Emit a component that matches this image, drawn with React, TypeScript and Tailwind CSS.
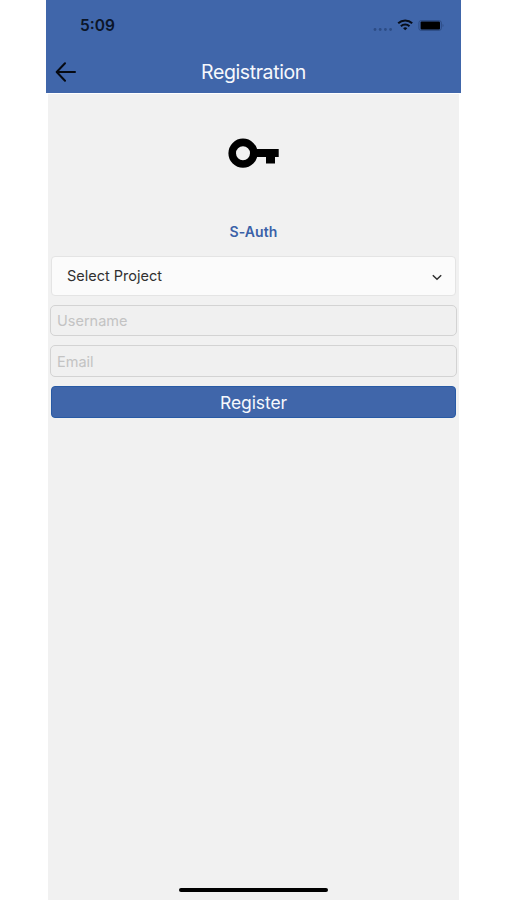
import React, { useState } from 'react'

//Key logo shown above the form
function KeyLogo() {
  return (
    <svg width="52" height="30" viewBox="0 0 52 30">
      <circle cx="15" cy="15.2" r="10.8" fill="none" stroke="#000" strokeWidth="7.6" />
      <path d="M27 11H50.7V18.9H47V25.4H38V18.9H27Z" fill="#000" />
    </svg>
  )
}

function StatusBar() {
  return (
    <div className="flex h-[51px] items-center justify-between pl-[34px] pr-[17px]">
      <span className="mt-px text-[15.5px] font-semibold leading-5 text-[#0b1528]">5:09</span>
      <svg className="mb-px" width="72" height="16" viewBox="0 0 72 16">
        {/* Signal dots */}
        <g fill="#2c4c85">
          <circle cx="3" cy="12.5" r="1.4" />
          <circle cx="8.2" cy="12.5" r="1.4" />
          <circle cx="13.4" cy="12.5" r="1.4" />
          <circle cx="18.6" cy="12.5" r="1.4" />
        </g>
        {/* Wifi */}
        <g fill="none" stroke="#060d1a" strokeWidth="2">
          <path d="M26.2 6.3a10.2 10.2 0 0 1 14 0" />
          <path d="M28.9 9.2a6.2 6.2 0 0 1 8.6 0" />
        </g>
        <path d="M33.2 13.3l-2.1-2.1a3 3 0 0 1 4.2 0Z" fill="#060d1a" />
        {/* Battery */}
        <rect x="46.9" y="3.6" width="22.4" height="9.8" rx="2.2" fill="none" stroke="#2c4c85" />
        <rect x="48.6" y="4.6" width="19.4" height="7.8" rx="1" fill="#000" />
        <path d="M70.6 7v3c1.2-.5 1.2-2.5 0-3Z" fill="#2c4c85" />
      </svg>
    </div>
  )
}

export default function App() {
  const [username, setUsername] = useState('')
  const [email, setEmail] = useState('')

  return (
    <div className="flex h-[900px] w-[506px] justify-center bg-white pl-px font-['Inter',sans-serif]">
      <main className="flex w-[415px] flex-col">
        <header className="h-[93px] bg-[#4066aa]">
          <StatusBar />
          <div className="grid h-[41px] grid-cols-[40px_1fr_40px] items-center">
            <button className="pl-[9px]">
              <svg width="22" height="20" viewBox="0 0 22 20" fill="none" stroke="#060a12" strokeWidth="2" strokeLinecap="round" strokeLinejoin="round">
                <path d="M20 10H2M10 1.3L1.7 10L10 18.7" />
              </svg>
            </button>
            <h1 className="text-center text-[19.5px] leading-6 tracking-[-0.4px] text-[#f6f8fc]">Registration</h1>
          </div>
        </header>

        <div className="mx-0.5 mt-px flex flex-1 flex-col items-center bg-[#f1f1f1] px-0.5">
          <div className="mt-11">
            <KeyLogo />
          </div>
          <p className="mt-[54px] text-[14px] font-semibold leading-5 tracking-[0.1px] text-[#3a61a8]">S-Auth</p>

          {/* Registration Form */}
          <form className="mt-[14px] flex w-full flex-col" onSubmit={(e) => e.preventDefault()}>
            <button type="button" className="mx-px flex h-10 items-center justify-between rounded-[4px] border border-[#e4e4e4] bg-[#fbfbfb] pl-[15px] pr-[13px] text-[14.5px] text-[#303030]">
              <span>Select Project</span>
              <svg className="mt-[3px]" width="10" height="7" viewBox="0 0 10 7" fill="none" stroke="#303030" strokeWidth="1.5">
                <path d="M0.8 1.2L5 5.2L9.2 1.2" />
              </svg>
            </button>
            <input
              value={username}
              placeholder="Username"
              onChange={(e) => setUsername(e.target.value)}
              className="mt-[9px] h-[31px] rounded-[5px] border-[1.5px] border-[#d3d3d3] bg-[#f0f0f0] px-1.5 text-[14.5px] placeholder:text-[#c3c3c3]"
            />
            <input
              value={email}
              placeholder="Email"
              onChange={(e) => setEmail(e.target.value)}
              className="mt-[9px] h-[32px] rounded-[5px] border-[1.5px] border-[#d3d3d3] bg-[#f0f0f0] px-1.5 text-[14.5px] placeholder:text-[#c3c3c3]"
            />
            <button className="mx-px mt-[9px] h-8 rounded-[4px] border border-[#285aa5] bg-[#4066aa] pt-px text-[17.5px] leading-6 tracking-[-0.1px] text-[#f6f8fc]">
              Register
            </button>
          </form>

          {/* Home Indicator */}
          <div className="mb-2 mt-auto h-[4.5px] w-[149px] rounded-full bg-black" />
        </div>
      </main>
    </div>
  )
}
